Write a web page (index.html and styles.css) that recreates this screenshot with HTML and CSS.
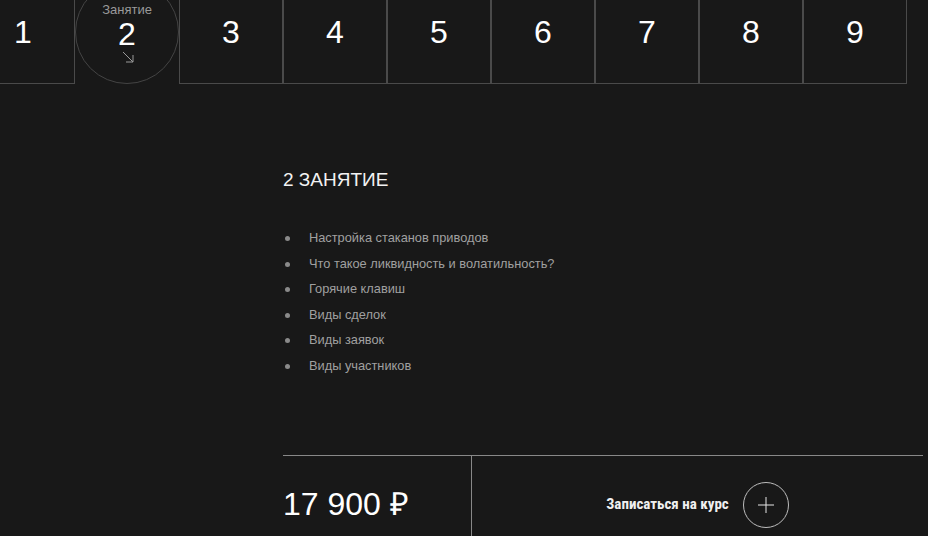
FILE: index.html
```html
<!DOCTYPE html>
<html lang="ru">
<head>
<meta charset="utf-8">
<title>Занятия</title>
<link rel="stylesheet" href="styles.css">
</head>
<body>
<nav class="tabs">
  <div class="tab">1</div>
  <div class="tab tab-active">
    <span class="tab-label">Занятие</span>
    <span class="tab-num">2</span>
    <svg class="tab-arrow" width="12" height="12" viewBox="0 0 12 12"><path d="M1 1 L11 11 M11 4 L11 11 L4 11" fill="none" stroke="#9a9a9a" stroke-width="1"/></svg>
  </div>
  <div class="tab">3</div>
  <div class="tab">4</div>
  <div class="tab">5</div>
  <div class="tab">6</div>
  <div class="tab">7</div>
  <div class="tab">8</div>
  <div class="tab">9</div>
</nav>
<main class="content">
  <h2 class="lesson-title">2 ЗАНЯТИЕ</h2>
  <ul class="topics">
    <li>Настройка стаканов приводов</li>
    <li>Что такое ликвидность и волатильность?</li>
    <li>Горячие клавиш</li>
    <li>Виды сделок</li>
    <li>Виды заявок</li>
    <li>Виды участников</li>
  </ul>
  <div class="buy">
    <div class="price">17 900 ₽</div>
    <div class="signup">
      <span class="signup-text">Записаться на курс</span>
      <span class="plus-btn"><svg width="16" height="16" viewBox="0 0 16 16"><path d="M8 0 V16 M0 8 H16" stroke="#e6e6e6" stroke-width="1"/></svg></span>
    </div>
  </div>
</main>
</body>
</html>
```
FILE: styles.css
```css
html, body {
  margin: 0;
  padding: 0;
  background: #181818;
  overflow: hidden;
}
body {
  font-family: "Liberation Sans", Arial, sans-serif;
  color: #fff;
  width: 928px;
  height: 536px;
}
.tabs {
  display: flex;
  margin-left: -29px;
  margin-top: -20px;
}
.tab {
  box-sizing: border-box;
  width: 104px;
  height: 104px;
  flex: none;
  border: 1px solid #4a4a4a;
  display: flex;
  align-items: center;
  justify-content: center;
  font-size: 32px;
  color: #fff;
}
.tab-active {
  border-radius: 50%;
  flex-direction: column;
  border-color: #444;
  padding-top: 1px;
}
.tab-label {
  font-size: 13px;
  color: #9a9a9a;
  line-height: 14px;
}
.tab-num {
  font-size: 32px;
  line-height: 35px;
}
.tab-arrow {
  display: block;
  margin-top: -1px;
  margin-left: 2px;
}
.content {
  margin-left: 283px;
  width: 640px;
  padding-top: 85px;
}
.lesson-title {
  margin: 0;
  font-size: 19px;
  font-weight: normal;
  line-height: 22px;
  color: #f2f2f2;
}
.topics {
  list-style: none;
  margin: 34px 0 0 0;
  padding: 0;
}
.topics li {
  position: relative;
  padding-left: 26px;
  font-size: 12.8px;
  line-height: 25.6px;
  color: #a0a0a0;
}
.topics li::before {
  content: "";
  position: absolute;
  left: 2px;
  top: 11px;
  width: 5px;
  height: 5px;
  border-radius: 50%;
  background: #8a8a8a;
}
.buy {
  margin-top: 76px;
  border-top: 1px solid #888;
  display: flex;
  height: 100px;
}
.price {
  box-sizing: border-box;
  width: 189px;
  border-right: 1px solid #888;
  font-size: 32px;
  padding-top: 30px;
  line-height: 36px;
}
.signup {
  flex: 1;
  display: flex;
  align-items: flex-start;
  justify-content: center;
  padding-top: 26px;
  gap: 14px;
}
.signup-text {
  font-family: "Liberation Sans Narrow", "Roboto Condensed", "Liberation Sans", sans-serif;
  font-stretch: condensed;
  font-weight: bold;
  font-size: 15px;
  line-height: 44px;
  color: #f0f0f0;
}
.plus-btn {
  box-sizing: border-box;
  width: 46px;
  height: 46px;
  border: 1px solid #bdbdbd;
  border-radius: 50%;
  display: flex;
  align-items: center;
  justify-content: center;
}
.plus-btn svg {
  display: block;
}
```
